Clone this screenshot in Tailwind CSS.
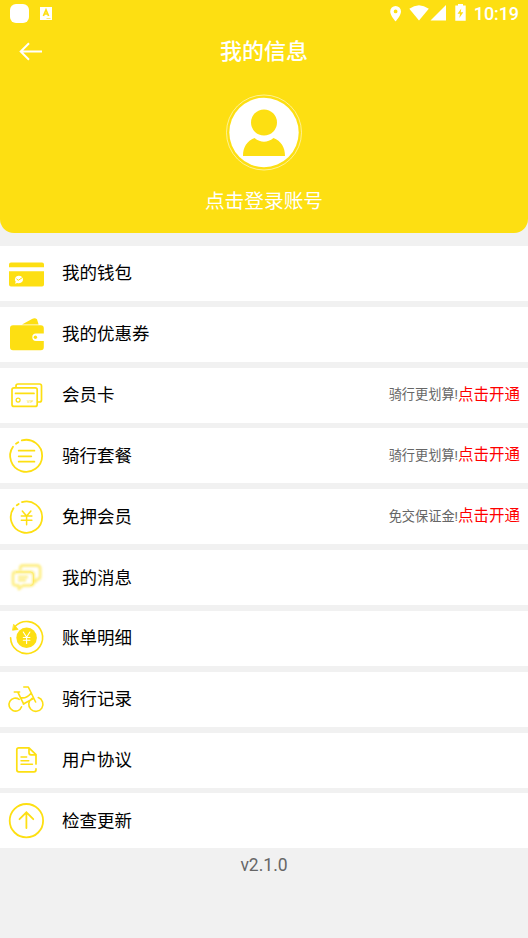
<!DOCTYPE html>
<html lang="zh-CN">
<head>
<meta charset="utf-8">
<title>我的信息</title>
<script src="https://cdn.jsdelivr.net/npm/@tailwindcss/browser@4"></script>
</head>
<body class="w-[528px] h-[938px] overflow-hidden bg-[#f1f1f1] font-['Roboto','Noto_Sans_CJK_SC',sans-serif] text-black">
<header class="h-[233px] rounded-b-[14px] bg-[#fddf12] text-white flex flex-col">
  <div class="h-[27px] flex items-center justify-between pl-[10px] pr-[9px] shrink-0">
    <div class="flex items-center gap-[11px]">
      <div class="size-[19px] rounded-[6px] bg-white"></div>
      <svg class="w-3 h-[13px]" viewBox="0 0 12 13"><path fill="#fff" d="M0 0h12v13H0z"/><path d="M3.4 9 6 3l2.6 6M4.3 7h3.4" fill="none" stroke="#fddf12" stroke-width="1.7"/><path d="M6.5 11.5h4" stroke="#fddf12" stroke-width=".6"/></svg>
    </div>
    <div class="flex items-center">
      <svg class="w-[84px] h-[27px]" viewBox="386 0 84 27" fill="#fff"><path fill-rule="evenodd" d="M395.6 6a5.4 5.4 0 0 0-5.4 5.4c0 4 5.4 9.9 5.4 9.9s5.4-5.9 5.4-9.9a5.4 5.4 0 0 0-5.4-5.4zm0 3.5a1.9 1.9 0 1 1 0 3.8 1.9 1.9 0 0 1 0-3.8z"/><path d="M409.3 8.8Q419 1.8 428.800 8.800L419 20.500z"/><path d="M446 5v15.500h-15.500z"/><path fill-rule="evenodd" d="M458 4h5v1.500h2.700v15.300h-10.400V5.500h2.700zm3.300 4.500-3.800 5.200h2.500l-.7 4.300 4-5.700h-2.600z"/></svg>
      <span class="w-[49px] text-right text-[18px] leading-[27px] tracking-[-0.1px] font-medium">10:19</span>
    </div>
  </div>
  <div class="h-[50px] flex items-center shrink-0 px-[18px]">
    <svg class="w-[26px] h-[24px]" viewBox="0 0 26 24" fill="none" stroke="#fff" stroke-width="2"><path d="M24 11.500H3M11 3.200 2.700 11.500l8.300 8.300"/></svg>
    <h1 class="flex-1 text-center text-[22px] leading-[30px] font-medium pr-[26px]">我的信息</h1>
  </div>
  <div class="flex flex-col items-center pt-[17px]">
    <svg class="size-[78px]" viewBox="0 0 78 78"><circle cx="39" cy="38.500" r="37.500" fill="none" stroke="#fff" stroke-opacity=".55"/><circle cx="39" cy="38.500" r="34.700" fill="#fff"/><circle cx="39" cy="28.500" r="13" fill="#fddf12"/><path fill="#fddf12" d="M18 62c0-9 4-15 11.500-18Q39 51.500 48.500 44C56 47 60 53 60 62z"/></svg>
    <p class="mt-[15px] text-[19.700px] leading-[30px]">点击登录账号</p>
  </div>
</header>
<main class="mt-[13px] flex flex-col gap-[5.840px] text-[17.500px] [&>div]:h-[55px] [&>div]:bg-white [&>div]:flex [&>div]:items-center [&>div]:pl-[6px] [&>div]:pr-[8px] [&_svg]:size-10 [&_svg]:mr-4 [&_svg]:shrink-0">
  <div>
    <svg viewBox="0 0 40 40" fill="#fddf12"><path d="M3 13.200v-2.700a2 2 0 0 1 2-2h31a2 2 0 0 1 2 2v2.700zM3 17.200h35v13.300a2 2 0 0 1-2 2H5a2 2 0 0 1-2-2z"/><path fill="#fff" d="M12.700 21.700a4.200 3.800 0 1 1-1.500 7.300l-2.200.8.700-2a3.800 3.800 0 0 1 3-6.100z"/><path d="m10.500 24.800 1.800 1.500 4.200-2.800" fill="none" stroke="#fddf12" stroke-width="1"/></svg>
    <span>我的钱包</span>
  </div>
  <div>
    <svg viewBox="0 0 40 40" fill="#fddf12"><path d="M16 10.400 26 5q3-1.500 5 .3l1.600 5.100zM7 11.300h27.800a3 3 0 0 1 3 3v5.300H30a3.700 3.700 0 0 0 0 7.400h7.800v6.300a3 3 0 0 1-3 3H7a3 3 0 0 1-3-3v-19a3 3 0 0 1 3-3z"/><circle cx="29.400" cy="23.200" r="1.700"/></svg>
    <span>我的优惠券</span>
  </div>
  <div>
    <svg viewBox="0 0 40 40" fill="none" stroke="#fddf12" stroke-width="1.700" stroke-linecap="round"><path d="M10 12V11a2 2 0 0 1 2-2h21.500a2 2 0 0 1 2 2v14a2 2 0 0 1-2 2h-1.500"/><rect x="6" y="12.900" width="25.200" height="18.500" rx="2"/><path d="M9.500 18.400h18.500"/><circle cx="12.100" cy="25.100" r="2" stroke-width="1.200"/><text x="21" y="27.600" font-size="4.200" font-family="Roboto" fill="#fddf12" stroke="none">VIP</text></svg>
    <span class="flex-1">会员卡</span><span class="text-[13.200px] text-[#666]">骑行更划算!</span><span class="text-[15.500px] text-[#f00]">点击开通</span>
  </div>
  <div>
    <svg viewBox="0 0 40 40" fill="none" stroke="#fddf12" stroke-width="1.800" stroke-linecap="round"><path d="M15.800 4.400A16 16 0 1 1 7 10.700M10 7.800l2.300-1.600M12.700 14.700h15.700M12.700 20.300h12.600M12.700 25.700h15.700"/></svg>
    <span class="flex-1">骑行套餐</span><span class="text-[13.200px] text-[#666]">骑行更划算!</span><span class="text-[15.500px] text-[#f00]">点击开通</span>
  </div>
  <div>
    <svg viewBox="0 0 40 40" fill="none" stroke="#fddf12" stroke-width="1.800" stroke-linecap="round"><path d="M16 5.100A15.700 15.700 0 1 1 7.500 11.300M10.800 8.200l1.900-1.300"/><path stroke-width="1.500" d="m16.300 14 4.300 5 4.300-5M20.600 19v8.800M15.300 19h10.600M15.300 23.200h10.600"/></svg>
    <span class="flex-1">免押会员</span><span class="text-[13.200px] text-[#666]">免交保证金!</span><span class="text-[15.500px] text-[#f00]">点击开通</span>
  </div>
  <div>
    <svg viewBox="0 0 40 40"><g class="blur-[0.8px]" fill="none" stroke="#fddf12" stroke-opacity=".5" stroke-width="2.800" stroke-linejoin="round"><path d="M14.200 12v-1.500q0-3 3-3h13.500q3.500 0 3.500 3.500v7q0 3.500-3.300 3.500l-1 2-1.500-1.500"/><path d="M10 14h14.500q3 0 3 3v7.500q0 3-3 3H17l-4 3.500-.5-3.500H10q-3 0-3-3V17q0-3 3-3z"/><path d="M12 19h10M12 22.300h8" stroke-width="2.500"/></g><path d="M10 14h14.500q3 0 3 3v7.500q0 3-3 3" fill="none" stroke="#fddf12" stroke-opacity=".35"/></svg>
    <span>我的消息</span>
  </div>
  <div>
    <svg viewBox="0 0 40 40" fill="none" stroke="#fddf12" stroke-width="1.600" stroke-linecap="round"><path d="M9 8.500A16 16 0 1 1 4.600 19.700"/><path d="m6.800 12.200 5.300-.8-4.200-4.800z" fill="#fddf12" stroke-width=".8"/><circle cx="20.600" cy="19.700" r="10.300" fill="#fddf12" stroke="none"/><path stroke="#fff" stroke-width="1.100" d="m17.300 14 3.300 5.200 3.300-5.200M20.600 19.200v6.300M17.300 19.500h6.600M17.300 22.300h6.600"/></svg>
    <span>账单明细</span>
  </div>
  <div>
    <svg viewBox="0 0 40 40" fill="none" stroke="#fddf12" stroke-width="1.600" stroke-linecap="round" stroke-linejoin="round"><path d="M13.200 20.300A6.500 6.500 0 1 0 15.600 27.800M26 19.300a7.100 7.100 0 1 0 6.300-.7M17.800 8h4.500l7.300 15M8.300 13h5.300M11.800 13.200l5.900 12M14.800 18.700c4.500 1 7-.7 10.500-4.800M17.400 25l10-5.500"/></svg>
    <span>骑行记录</span>
  </div>
  <div>
    <svg viewBox="0 0 40 40" fill="none" stroke="#fddf12" stroke-width="1.700" stroke-linecap="round" stroke-linejoin="round"><path d="M30 24v-9.300L23 7.800H12.800a2 2 0 0 0-2 2v20a2 2 0 0 0 2 2H28a2 2 0 0 0 2-2v-1M23 7.800v5a2 2 0 0 0 2 2h5"/><path stroke-width="1.400" d="M15 17h5.700M15 20.700h7.800M15 24.300h11.500"/></svg>
    <span>用户协议</span>
  </div>
  <div>
    <svg viewBox="0 0 40 40" fill="none" stroke="#fddf12" stroke-width="1.800" stroke-linecap="round"><circle cx="20.400" cy="19.700" r="16.700"/><path d="M20.400 11.500v15.500M13.500 18.200l6.900-6.900 6.900 6.900"/></svg>
    <span>检查更新</span>
  </div>
</main>
<footer class="pt-[4px] text-center text-[17.500px] leading-[26px] text-[#666]">v2.1.0</footer>
</body>
</html>
